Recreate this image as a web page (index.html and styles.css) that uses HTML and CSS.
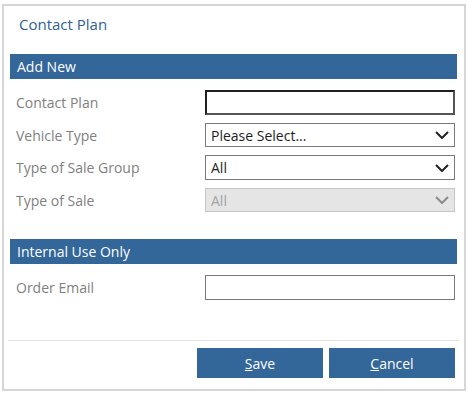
FILE: index.html
```html
<!doctype html>
<html>
    <head>
        <title>Contact Plan</title>
        <meta charset="UTF-8">
        <link rel="stylesheet" href="styles.css">
    </head>

    <body>
        <div class="dialog">
            <h1 class="title">Contact Plan</h1>

            <!--Add New Start-->
            <div class="bar">Add New</div>
            <div class="rows">
                <div class="row">
                    <label class="label">Contact Plan</label>
                    <input class="field focus" type="text">
                </div>
                <div class="row">
                    <label class="label">Vehicle Type</label>
                    <div class="pick short">
                        <select class="field"><option>Please Select...</option></select>
                        <svg class="chev" width="14" height="8" viewBox="0 0 14 8"><polyline points="1,1 7,7 13,1" fill="none" stroke="#222" stroke-width="2"/></svg>
                    </div>
                </div>
                <div class="row">
                    <label class="label">Type of Sale Group</label>
                    <div class="pick">
                        <select class="field"><option>All</option></select>
                        <svg class="chev" width="14" height="8" viewBox="0 0 14 8"><polyline points="1,1 7,7 13,1" fill="none" stroke="#222" stroke-width="2"/></svg>
                    </div>
                </div>
                <div class="row">
                    <label class="label">Type of Sale</label>
                    <div class="pick short">
                        <select class="field" disabled><option>All</option></select>
                        <svg class="chev" width="14" height="8" viewBox="0 0 14 8"><polyline points="1,1 7,7 13,1" fill="none" stroke="#8a8a8a" stroke-width="2"/></svg>
                    </div>
                </div>
            </div>
            <!--Add New End-->

            <!--Internal Start-->
            <div class="bar internal">Internal Use Only</div>
            <div class="rows">
                <div class="row">
                    <label class="label">Order Email</label>
                    <input class="field" type="text">
                </div>
            </div>
            <!--Internal End-->

            <div class="footer">
                <button class="btn"><u>S</u>ave</button>
                <button class="btn"><u>C</u>ancel</button>
            </div>
        </div>
    </body>
</html>
```

FILE: styles.css
```css
body{
    margin: 0;
    background: white;
    font-family: "Open Sans", "Noto Sans", Arial, sans-serif;
}

.dialog{
    box-sizing: border-box;
    width: 464px;
    height: 387px;
    margin: 4px 0 0 2px;
    border: 2px solid #d6d6d6;
    display: flex;
    flex-direction: column;
}

.title{
    margin: 0;
    height: 48px;
    padding-left: 15px;
    font-size: 15px;
    font-weight: normal;
    line-height: 37px;
    color: #2f6196;
}

.bar{
    height: 25px;
    margin: 0 7px 0 6px;
    padding-left: 7px;
    background: #336699;
    color: white;
    font-size: 14px;
    line-height: 25px;
}

.internal{
    margin-top: 27px;
}

.rows{
    display: flex;
    flex-direction: column;
    gap: 8px;
    margin-top: 11px;
    padding: 0 9px 0 12px;
}

.row{
    display: flex;
    align-items: center;
    justify-content: space-between;
}

.label{
    font-size: 14px;
    color: #7f7f7f;
}

.field{
    box-sizing: border-box;
    width: 250px;
    height: 25px;
    margin: 0;
    padding: 0 5px;
    border: 1px solid #7a7a7a;
    background: white;
    font-family: inherit;
    font-size: 14px;
    color: #1e1e1e;
    border-radius: 0;
    outline: none;
}

.focus{
    border: 2px solid #1f1f1f;
    border-right-color: #555;
    border-bottom-color: #555;
}

.pick{
    position: relative;
    width: 250px;
}

.pick select{
    appearance: none;
    -webkit-appearance: none;
    display: block;
}

.short select{
    height: 24px;
}

.pick select:disabled{
    background: #e5e5e5;
    border-color: #c6c6c6;
    color: #a3a3a3;
    opacity: 1;
}

.chev{
    position: absolute;
    right: 6px;
    top: 50%;
    margin-top: -4px;
    pointer-events: none;
}

.footer{
    margin: auto 5px 0 4px;
    padding: 7px 4px 11px 0;
    border-top: 1px solid #e2e2e2;
    display: flex;
    justify-content: flex-end;
    gap: 6px;
}

.btn{
    width: 126px;
    height: 30px;
    border: none;
    background: #336699;
    color: white;
    font-family: inherit;
    font-size: 14px;
    padding: 0;
}
```
